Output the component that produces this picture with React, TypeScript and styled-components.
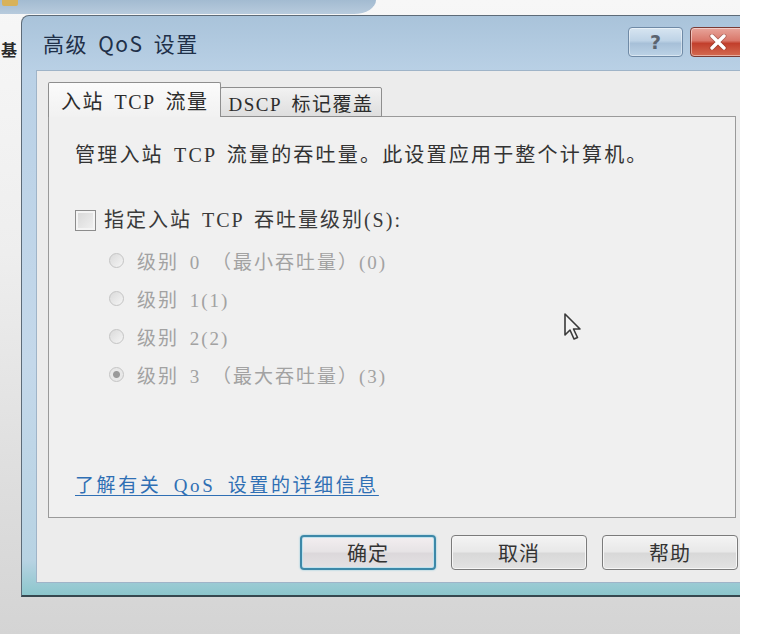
import React from "react";
import styled, { createGlobalStyle } from "styled-components";

const GlobalStyle = createGlobalStyle`
  html, body {
    margin: 0;
    padding: 0;
    background: #ffffff;
  }
  #root {
    width: 757px;
    height: 634px;
    overflow: hidden;
  }
`;

const CJK = `"Noto Sans CJK SC", "Noto Sans", sans-serif`;
const BODY = `"Liberation Serif", "Noto Sans CJK SC", serif`;

const Page = styled.div`
  display: flex;
  width: 757px;
  height: 634px;
  overflow: hidden;
`;

const Desk = styled.div`
  position: relative;
  width: 740px;
  height: 634px;
  flex-shrink: 0;
  overflow: hidden;
  display: flex;
  flex-direction: column;
  background: linear-gradient(180deg, #f7f7f7 0%, #eeeeee 40%, #dcdcdc 80%, #d4d4d4 100%);
`;

const WhiteEdge = styled.div`
  flex: 1;
  background: #ffffff;
`;

const ParentBar = styled.div`
  height: 14px;
  width: 376px;
  flex-shrink: 0;
  display: flex;
  align-items: flex-start;
  background: linear-gradient(180deg, #a3bbd1 0%, #b8cbdd 100%);
  border-bottom-right-radius: 22px 14px;
`;

const ParentIcon = styled.div`
  width: 16px;
  height: 6px;
  margin-left: 2px;
  background: #d8b25a;
  border-radius: 0 0 2px 2px;
`;

const DeskBody = styled.div`
  display: flex;
  align-items: flex-start;
  margin-top: 1px;
`;

const SideLabel = styled.div`
  width: 21px;
  flex-shrink: 0;
  padding: 24px 0 0 1px;
  box-sizing: border-box;
  font-family: ${CJK};
  font-size: 16px;
  font-weight: 700;
  line-height: 20px;
  color: #2a2a2a;
  white-space: nowrap;
`;

const Dialog = styled.div`
  width: 736px;
  flex-shrink: 0;
  border: 1px solid #5d6b78;
  border-bottom: 2px solid #37474f;
  border-radius: 8px 8px 0 0;
  padding: 0 0 12px 14px;
  background: linear-gradient(180deg, #a9c3da 0%, #bad1e6 10%, #c4d8ea 60%, #b8d3e3 94%, #8cc6cc 100%);
  box-sizing: border-box;
`;

const TitleBar = styled.div`
  height: 54px;
  display: flex;
  align-items: center;
  padding-left: 7px;
  padding-right: 10px;
`;

const Title = styled.div`
  font-family: ${CJK};
  font-size: 21px;
  color: #1f3049;
  letter-spacing: 1.5px;
  word-spacing: 4px;
`;

const CaptionButtons = styled.div`
  margin-left: auto;
  display: flex;
  gap: 7px;
  margin-top: -2px;
`;

const CaptionButton = styled.div<{ $danger?: boolean }>`
  width: ${(p) => (p.$danger ? 56 : 55)}px;
  height: 30px;
  box-sizing: border-box;
  border: 1px solid ${(p) => (p.$danger ? "#7a3a33" : "#6f8aa6")};
  border-radius: 4px;
  display: flex;
  align-items: center;
  justify-content: center;
  background: ${(p) =>
    p.$danger
      ? "linear-gradient(180deg, #e8a59b 0%, #d9776a 45%, #c23f2c 55%, #d46a50 100%)"
      : "linear-gradient(180deg, #d7e5f1 0%, #bed3e6 45%, #a7c0d8 55%, #bcd3e6 100%)"};
  box-shadow: inset 0 0 0 1px rgba(255, 255, 255, 0.45);
`;

const HelpGlyph = styled.span`
  font-family: "DejaVu Sans", sans-serif;
  font-size: 19px;
  font-weight: 700;
  color: #5b6470;
  line-height: 1;
`;

const Client = styled.div`
  height: 513px;
  box-sizing: border-box;
  background: #ececec;
  border: 1px solid #9fb4c8;
  border-right: none;
  padding: 12px 0 0 11px;
  display: flex;
  flex-direction: column;
`;

const TabStrip = styled.div`
  display: flex;
  align-items: flex-end;
  height: 34px;
  position: relative;
  z-index: 1;
`;

const Tab = styled.div<{ $active?: boolean }>`
  height: ${(p) => (p.$active ? 35 : 30)}px;
  box-sizing: border-box;
  padding: 0 ${(p) => (p.$active ? 12 : 7)}px;
  display: flex;
  align-items: center;
  border: 1px solid #8e8e8e;
  border-bottom: ${(p) => (p.$active ? "none" : "1px solid #8e8e8e")};
  margin-left: ${(p) => (p.$active ? 0 : -1)}px;
  border-radius: 2px 2px 0 0;
  background: ${(p) =>
    p.$active
      ? "linear-gradient(180deg, #fbfbfb 0%, #f1f1f1 100%)"
      : "linear-gradient(180deg, #f2f2f2 0%, #dedede 100%)"};
  font-family: ${BODY};
  font-size: ${(p) => (p.$active ? 20 : 19)}px;
  letter-spacing: 1.5px;
  word-spacing: 4px;
  color: #2c2c2c;
  white-space: pre;
`;

const Panel = styled.div`
  width: 688px;
  height: 402px;
  box-sizing: border-box;
  margin-top: -1px;
  border: 1px solid #9a9a9a;
  background: #f0f0f0;
  padding: 24px 0 20px 26px;
  display: flex;
  flex-direction: column;
`;

const Description = styled.div`
  font-family: ${BODY};
  font-size: 20px;
  letter-spacing: 2.2px;
  word-spacing: 3px;
  line-height: 28px;
  color: #333333;
  white-space: pre;
`;

const CheckRow = styled.label`
  display: flex;
  align-items: center;
  gap: 8px;
  margin-top: 37px;
  font-family: ${BODY};
  font-size: 20px;
  letter-spacing: 2px;
  word-spacing: 3px;
  line-height: 28px;
  color: #3a3a3a;
  white-space: pre;
`;

const CheckBox = styled.span`
  width: 21px;
  height: 21px;
  box-sizing: border-box;
  border: 1px solid #8c8c8c;
  background: linear-gradient(135deg, #d6d6d6 0%, #f2f2f2 100%);
  box-shadow: inset 0 0 0 2px #f4f4f4;
`;

const RadioList = styled.div`
  display: flex;
  flex-direction: column;
  gap: 10px;
  margin-top: 12px;
  padding-left: 34px;
`;

const RadioRow = styled.div`
  display: flex;
  align-items: center;
  gap: 13px;
  height: 28px;
  font-family: ${BODY};
  font-size: 19px;
  letter-spacing: 2px;
  word-spacing: 4px;
  color: #a2a2a2;
  white-space: pre;
`;

const RadioDot = styled.span<{ $checked?: boolean }>`
  width: 15px;
  height: 15px;
  flex-shrink: 0;
  box-sizing: border-box;
  border-radius: 50%;
  border: 1px solid #c4c4c4;
  background: ${(p) =>
    p.$checked
      ? "radial-gradient(circle, #9a9a9a 0 3px, #e8e8e8 4px)"
      : "linear-gradient(135deg, #dadada 0%, #f5f5f5 100%)"};
`;

const InfoLink = styled.a`
  margin-top: auto;
  align-self: flex-start;
  font-family: ${BODY};
  font-size: 19px;
  letter-spacing: 2.6px;
  word-spacing: 5px;
  color: #2f6fb4;
  text-decoration: underline;
  text-underline-offset: 3px;
  white-space: pre;
`;

const ButtonRow = styled.div`
  display: flex;
  gap: 15px;
  margin-top: 17px;
  padding-left: 252px;
`;

const DialogButton = styled.button<{ $default?: boolean }>`
  width: 136px;
  height: 35px;
  box-sizing: border-box;
  border-radius: 4px;
  border: ${(p) => (p.$default ? "2px solid #3d88a8" : "1px solid #7b7b7b")};
  background: ${(p) =>
    p.$default
      ? "linear-gradient(180deg, #f3eef0 0%, #e6e3e5 48%, #dcd8db 52%, #e4e1e3 100%)"
      : "linear-gradient(180deg, #f4f4f4 0%, #e8e8e8 48%, #d8d8d8 52%, #e2e2e2 100%)"};
  box-shadow: ${(p) => (p.$default ? "0 0 2px #7bc2d8, inset 0 0 0 1px #bfe2ee" : "inset 0 0 0 1px #f6f6f6")};
  font-family: ${CJK};
  font-size: 20px;
  color: #333333;
  padding: 0;
  letter-spacing: 1px;
`;

const Pointer = styled.svg`
  position: absolute;
  left: 563px;
  top: 312px;
  width: 22px;
  height: 30px;
`;

export default function App() {
  return (
    <Page>
      <GlobalStyle />
      <Desk>
        <ParentBar>
          <ParentIcon />
        </ParentBar>
        <DeskBody>
          <SideLabel>基</SideLabel>
          <Dialog>
            <TitleBar>
              <Title>高级 QoS 设置</Title>
              <CaptionButtons>
                <CaptionButton>
                  <HelpGlyph>?</HelpGlyph>
                </CaptionButton>
                <CaptionButton $danger>
                  <svg width="18" height="16" viewBox="0 0 18 16">
                    <path d="M3 2 L15 14 M15 2 L3 14" stroke="#5a1d16" strokeWidth="5" strokeLinecap="round" opacity="0.35" />
                    <path d="M3 2 L15 14 M15 2 L3 14" stroke="#ffffff" strokeWidth="3.4" strokeLinecap="round" />
                  </svg>
                </CaptionButton>
              </CaptionButtons>
            </TitleBar>
            <Client>
              <TabStrip>
                <Tab $active>入站 TCP 流量</Tab>
                <Tab>DSCP 标记覆盖</Tab>
              </TabStrip>
              <Panel>
                <Description>管理入站 TCP 流量的吞吐量。此设置应用于整个计算机。</Description>
                <CheckRow>
                  <CheckBox />
                  指定入站 TCP 吞吐量级别(S):
                </CheckRow>
                <RadioList>
                  <RadioRow>
                    <RadioDot />
                    级别 0 （最小吞吐量）(0)
                  </RadioRow>
                  <RadioRow>
                    <RadioDot />
                    级别 1(1)
                  </RadioRow>
                  <RadioRow>
                    <RadioDot />
                    级别 2(2)
                  </RadioRow>
                  <RadioRow>
                    <RadioDot $checked />
                    级别 3 （最大吞吐量）(3)
                  </RadioRow>
                </RadioList>
                <InfoLink href="#">了解有关 QoS 设置的详细信息</InfoLink>
              </Panel>
              <ButtonRow>
                <DialogButton $default>确定</DialogButton>
                <DialogButton>取消</DialogButton>
                <DialogButton>帮助</DialogButton>
              </ButtonRow>
            </Client>
          </Dialog>
        </DeskBody>
        <Pointer viewBox="0 0 22 30">
          <path
            d="M2 2 L2 23 L7 18 L11 27 L14.5 25.5 L10.5 17 L17 17 Z"
            fill="#f4f4f4"
            stroke="#3a3a3a"
            strokeWidth="1.6"
            strokeLinejoin="round"
          />
        </Pointer>
      </Desk>
      <WhiteEdge />
    </Page>
  );
}
